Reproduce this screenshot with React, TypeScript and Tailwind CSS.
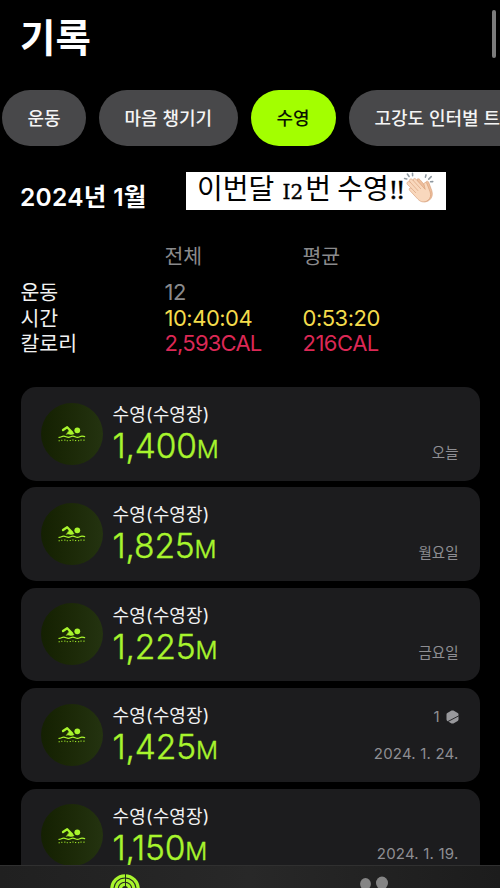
import React from "react";

const KR = "font-['Inter','Noto_Sans_CJK_KR',sans-serif]";

type Workout = { distance: string; date: string; count?: number };

const workouts: Workout[] = [
  { distance: "1,400", date: "오늘" },
  { distance: "1,825", date: "월요일" },
  { distance: "1,225", date: "금요일" },
  { distance: "1,425", date: "2024. 1. 24.", count: 1 },
  { distance: "1,150", date: "2024. 1. 19." },
];

function Swimmer() {
  return (
    <svg viewBox="0 0 28 18" className="h-[18px] w-7" fill="none" stroke="#a8f52d" strokeLinecap="round" strokeLinejoin="round">
      <path d="M5 5 9.200 2.200 13.800 7" strokeWidth="2.300" />
      <path d="M11.800 4.800 16.200 8.500c-1.300 1-2.800 1.300-4.200.9-1.100-.3-2-.6-3.400-.1Z" fill="#a8f52d" strokeWidth=".5" />
      <circle cx="19.300" cy="5.300" r="2.900" fill="#a8f52d" stroke="none" />
      <path d="M1 12.300c2.200 0 2.600-1.100 4.700-1.100s2.700 1.100 4.700 1.100 2.500-1.100 4.500-1.100 2.600 1.100 4.600 1.100 2.500-1.100 4.400-1.100c1.100 0 1.700.3 2.700.5" strokeWidth="1.300" />
      <path d="M1 15.800c2.200 0 2.600-.8 4.700-.8s2.700.8 4.700.8 2.500-.8 4.500-.8 2.600.8 4.600.8 2.500-.8 4.400-.8c1.100 0 1.700.1 2.700.2" strokeWidth="1.100" strokeDasharray=".3 2.500" />
    </svg>
  );
}

function Clap() {
  return (
    <svg viewBox="0 0 30 30" className="h-[31px] w-[31px] shrink-0">
      <g fill="#efbf9c" stroke="#d59c76" strokeWidth=".6" strokeLinejoin="round">
        <path d="M13.500 7.200c1-1.200 2.300-.5 3 .3l6.400 7.400-.9-4.200c-.3-1.900 2.200-2.500 2.900-.7l3 8.200c1.100 4 .2 6.700-2.300 9-3.400 2.700-7 1.700-9.200-.8Z" />
        <path fill="#f9d8bd" d="M4.200 9.900c1-1.200 2.200-.6 3 .2l-.7-.9c-1.200-1.700 1-3.500 2.500-1.900l1 1.100c-.8-1.700 1.200-3 2.500-1.500l9 9.900-1.200-4.700c-.3-2 2-2.700 2.800-1l3.200 8.300c1 3.500.2 6-2.200 8-3.300 2.500-7 1.800-9.600-1l-8-8.600c-1.300-1.500.1-3.100 1.700-2L4.400 12.200c-.7-.8-.8-1.500-.2-2.300Z" />
        <path fill="none" d="m7.200 10.100 7.500 8.200M10 8.400l7.300 8M8.200 15.800l4.300 4.500" />
      </g>
      <g stroke="#8d979f" strokeWidth="1.500" strokeLinecap="round">
        <path d="m1.500 6.300 2.200.4M4.200 2l1.700 2.400M9.200 1.300l.1 2.400M22.300 2.800l-.6 2.200M27.300 4.500l-2.400 2.400M28.800 9.300l-2.100.1" />
      </g>
    </svg>
  );
}

function Pill({ label, width, active = false }: { label: string; width: string; active?: boolean }) {
  return (
    <div className={`flex h-14 shrink-0 items-center rounded-[28px] pt-[2px] text-[18px] font-medium leading-none ${width} ${active ? "bg-[#a3ff00] text-[#0c1400]" : "bg-[#48484a] text-[#f4f4f4]"}`}>
      <span className="whitespace-nowrap pl-[25.500px]">{label}</span>
    </div>
  );
}

function Card({ distance, date, count }: Workout) {
  return (
    <div className="flex h-[93.500px] shrink-0 rounded-[15px] bg-[#1c1c1e] pl-5 pr-[21px]">
      <div className="mt-[15.500px] flex h-[62px] w-[62px] items-center justify-center rounded-full bg-linear-to-r from-[#142002] to-[#243310] pt-px">
        <Swimmer />
      </div>
      <div className="ml-[10px] flex flex-col whitespace-nowrap pt-[16px]">
        <div className="h-6 text-[18px] leading-6 tracking-[0.150px] text-[#f2f2f2]">수영(수영장)</div>
        <div className="-mt-px h-10 text-[33.500px] font-light leading-10 tracking-[-0.150px] text-[#a8f52d] [-webkit-text-stroke:0.400px_#a8f52d]">
          {distance}
          <span className="text-[24.500px]">M</span>
        </div>
      </div>
      <div className="ml-auto flex flex-col items-end justify-end pb-[18px] text-[15px] leading-5 text-[#8e8e93]">
        {count && (
          <div className="mb-[17px] flex items-center gap-[6px]">
            <span>{count}</span>
            <svg viewBox="0 0 13 14" className="h-[14px] w-[13px]">
              <path d="M6.500.400q.5 0 .9.200l4.300 2.500q.8.500.8 1.300v5.200q0 .8-.8 1.300l-4.300 2.500q-.9.400-1.800 0l-4.300-2.500q-.8-.5-.8-1.300V4.400q0-.8.8-1.300L5.600.600q.4-.2.900-.2Z" fill="#98989c" />
              <path d="M1.800 11.600 12.800 5.800" stroke="#1c1c1e" strokeWidth=".9" />
            </svg>
          </div>
        )}
        <div className={date.startsWith("2") ? "tracking-[0.200px]" : "text-[14.500px]"}>{date}</div>
      </div>
    </div>
  );
}

export default function App() {
  return (
    <div className={`relative flex h-[888px] w-[500px] flex-col overflow-hidden bg-black ${KR}`}>
      <header className="flex h-[90px] shrink-0 justify-between pl-5 pr-1">
        <h1 className="mt-[10px] text-[38.500px] font-bold leading-[56px] text-white">기록</h1>
        <div className="mt-[10px] h-12 w-1 rounded-full bg-[#7c7c7c]" />
      </header>

      <nav className="flex shrink-0 gap-[13px] pl-[2px]">
        <Pill label="운동" width="w-[84px]" />
        <Pill label="마음 챙기기" width="w-[139px]" />
        <Pill label="수영" width="w-[85px]" active />
        <Pill label="고강도 인터벌 트" width="w-[235px]" />
      </nav>

      <section className="flex h-[64px] shrink-0 pl-5 pt-[26px]">
        <h2 className="mt-[9px] w-[166px] whitespace-nowrap text-[24.500px] font-semibold leading-8 tracking-[0.300px] text-white">2024년 1월</h2>
        <div className="flex h-[38px] w-[260px] items-start whitespace-nowrap bg-white pl-[11px] text-black">
          <span className="font-['Noto_Sans_CJK_KR',sans-serif] text-[28px] leading-[31px]">
            이번달{" "}
            <span className="ml-[2px] font-['DejaVu_Serif',serif] text-[20px] leading-none [-webkit-text-stroke:0.400px_#000]">I2</span>
            <span className="ml-[2px]">번 수영</span>
            <span className="font-['Liberation_Serif',serif] tracking-[-2px] [-webkit-text-stroke:0.400px_#000]">!!</span>
          </span>
          <Clap />
        </div>
      </section>

      <section className="mt-[35px] grid h-[142px] shrink-0 grid-cols-[144px_138px_1fr] grid-rows-[35px_25.500px_25.500px_25.500px] whitespace-nowrap pl-[20.500px] text-[20px] leading-[25px] text-[#f2f2f2]">
        <span />
        <span className="-mt-px text-[20.500px] text-[#8a8a8c]">전체</span>
        <span className="-mt-px text-[20.500px] text-[#8a8a8c]">평균</span>
        <span className="text-[20.500px]">운동</span>
        <span className="text-[22px] tracking-[-0.400px] text-[#8a8a8c]">12</span>
        <span />
        <span className="text-[20.500px]">시간</span>
        <span className="text-[22px] tracking-[-0.500px] text-[#f4dc4c]">10:40:04</span>
        <span className="text-[22px] tracking-[-0.500px] text-[#f4dc4c]">0:53:20</span>
        <span className="text-[20.500px]">칼로리</span>
        <span className="text-[22px] tracking-[-0.800px] text-[#dc2855]">2,593CAL</span>
        <span className="text-[22px] tracking-[-0.500px] text-[#dc2855]">216CAL</span>
      </section>

      <main className="flex min-h-0 flex-1 flex-col gap-[6.900px] overflow-hidden px-[20.500px]">
        {workouts.map((w) => (
          <Card key={w.distance} {...w} />
        ))}
      </main>

      <footer className="absolute inset-x-0 bottom-0 flex h-[23px] overflow-hidden border-t border-[#303030] bg-linear-to-r from-[#202020] via-[#282828] to-[#1c1c1c]">
        <div className="flex w-1/2 justify-center pt-2">
          <svg viewBox="0 0 30 30" className="h-[30px] w-[30px]" fill="none" stroke="#a8f52d" strokeWidth="3.200">
            <circle cx="15" cy="15" r="13.200" />
            <circle cx="15" cy="15" r="8.900" />
            <circle cx="15" cy="15" r="4.600" />
            <path d="M15.500 0v15" stroke="#242b18" strokeWidth="1" />
          </svg>
        </div>
        <div className="flex w-1/2 justify-center pt-[10px]">
          <svg viewBox="0 0 30 24" className="h-6 w-[30px]" fill="#858585">
            <ellipse cx="5.500" cy="8" rx="5.400" ry="6" />
            <ellipse cx="22" cy="7" rx="6" ry="6.500" />
          </svg>
        </div>
      </footer>
    </div>
  );
}
